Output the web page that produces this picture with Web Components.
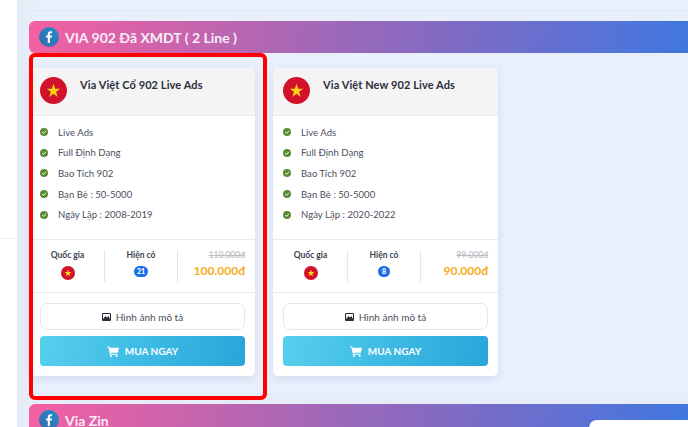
<!DOCTYPE html>
<html><head><meta charset="utf-8">
<style>
html,body{margin:0;height:427px;overflow:hidden;background:#fff}
body{font-family:Lato,"Noto Sans",sans-serif;background:#fff linear-gradient(#e8eff8,#e8eff8) 0 238px/17px 1px no-repeat}
</style></head><body>
<template id="fb-t"><style>:host{display:block;width:20px;height:20px;flex:none}svg{display:block}</style>
<svg width="20" height="20" viewBox="0 0 20 20"><defs><linearGradient id="g" x1="0" y1="1" x2="1" y2="0"><stop offset="0" stop-color="#3b6aa8"/><stop offset="1" stop-color="#1c8fc9"/></linearGradient></defs><circle cx="10" cy="10" r="10" fill="url(#g)"/><path d="M10.900 16V10.600h1.800l.3-2.100h-2.100V7.200c0-.6.2-1 1-1H13.100V4.300c-.2 0-.9-.1-1.600-.1-1.600 0-2.700 1-2.700 2.800v1.500H7v2.100h1.800V16z" fill="#fff"/></svg></template>

<template id="flag-t"><style>:host{display:block;width:var(--s,27px);height:var(--s,27px);flex:none}svg{display:block;width:100%;height:100%}</style>
<svg viewBox="0 0 26 26"><circle cx="13" cy="13" r="13" fill="#d2112c"/><polygon fill="#fcd116" points="13,6.500 14.600,11.300 19.500,11.300 15.500,14.300 17,19.200 13,16.200 9,19.200 10.500,14.300 6.500,11.300 11.400,11.300"/></svg></template>

<template id="sec-t"><style>
:host{display:flex;align-items:center;gap:6px;box-sizing:border-box;height:32px;padding-left:10px;border-radius:6px 0 0 6px;background:linear-gradient(97deg,#f55fa2 0%,#b566b2 34%,#7d6bc5 65%,#3f78e0 100%);color:#f8eef6;font-weight:700;font-size:14px;position:relative}
.w{position:absolute;right:0;top:16px;width:99px;height:20px;background:#fff;border-radius:8px 0 0 0}
</style><x-fb></x-fb><span><slot></slot></span><slot name="extra"></slot></template>

<template id="card-t"><style>
:host{display:block;width:225px;height:308px;flex:none;background:#fff;border-radius:5px;box-shadow:0 3px 10px rgba(120,150,200,.22);color:#3d4252;font-size:10px}
.head{display:flex;gap:13px;padding:9px 10px 0;box-sizing:border-box;background:#f4f4f5;border-radius:5px 5px 0 0;border-bottom:1px solid #e6ebf4;height:48px}
.title{font-size:11px;font-weight:700;color:#2a2e3c;line-height:15px;letter-spacing:.1px}
ul{list-style:none;margin:0;padding:6px 10px 0;height:124px;box-sizing:border-box;border-bottom:1px solid #e6ebf4}
.stats{display:flex;height:53px;box-sizing:border-box;padding:10px 0 0;border-bottom:1px solid #e6ebf4}
.c{display:flex;flex-direction:column;align-items:center;box-sizing:border-box;height:32px;gap:5px;font-size:8.500px;font-weight:700;color:#3a3f4e;line-height:11px}
.c1{width:74px;padding-left:1px}.c2{width:74px;border:solid #dde6f2;border-width:0 1px}
.c3{flex:1;align-items:flex-end;padding-right:10px;gap:1px;font-weight:500}
.old{color:#b9bcc4;text-decoration:line-through}
.price{font-size:12px;font-weight:700;color:#f5ac23;line-height:17px;white-space:nowrap}
.pill{background:#1c6fe8;color:#fff;border-radius:6px;font-size:7px;font-weight:900;height:11px;line-height:11px;min-width:12px;padding:0 3px;text-align:center;box-sizing:border-box}
.btns{padding:10px;display:flex;flex-direction:column;gap:6px}
.b{height:27px;border:1px solid #e3e9f4;border-radius:7px;display:flex;align-items:center;justify-content:center;gap:5px;font-size:10px;color:#4a4e5c;box-sizing:border-box}
.buy{height:30px;border:0;border-radius:4px;background:linear-gradient(100deg,#55d0ee,#29a5da);color:#fff;font-weight:700;font-size:10px;gap:6px}
</style>
<div class="head"><x-flag></x-flag><div class="title"><slot name="title"></slot></div></div>
<ul><slot name="item"></slot></ul>
<div class="stats">
<div class="c c1"><span>Quốc gia</span><x-flag style="--s:14px"></x-flag></div>
<div class="c c2"><span>Hiện có</span><span class="pill"><slot name="stock"></slot></span></div>
<div class="c c3"><span class="old"><slot name="old"></slot></span><span class="price"><slot name="price"></slot></span></div>
</div>
<div class="btns">
<div class="b"><svg width="9" height="8" viewBox="0 0 9 8"><rect width="9" height="8" rx="1" fill="#2c2f38"/><rect x="1" y="1" width="7" height="5" fill="#fff"/><path d="M1 6l2.500-3 1.500 1.500L6.500 3 8 6z" fill="#2c2f38"/></svg><span>Hình ảnh mô tả</span></div>
<div class="b buy"><svg width="12" height="11" viewBox="0 0 12 11"><path d="M0 .5h2.200l.4 1.300H12l-1.200 5H3.700l.2 1H10.500v1H3L1.500 1.500H0z" fill="#fff"/><circle cx="4" cy="10" r="1" fill="#fff"/><circle cx="9.700" cy="10" r="1" fill="#fff"/></svg><span>MUA NGAY</span></div>
</div></template>

<template id="li-t"><style>
:host{display:flex;align-items:center;gap:10px;height:20.600px;font-size:9.500px;color:#4a4e5c;letter-spacing:.05px}
svg{flex:none}
</style><svg width="8" height="8" viewBox="0 0 8 8"><circle cx="4" cy="4" r="4" fill="#5b8a35"/><path d="M2.200 4.100l1.300 1.300 2.400-2.600" fill="none" stroke="#fff" stroke-width="1"/></svg><span><slot></slot></span></template>

<template id="main-t"><style>
:host{display:block;box-sizing:border-box;height:427px;overflow:hidden;margin-left:17px;padding:0 0 0 12px;background:linear-gradient(90deg,#e4ecf8,#e9f0fc 24px);position:relative}
.top{height:10px;border-bottom:1px solid #e2e9f6;margin-left:-12px}
.sp{height:10px}
.row{display:flex;align-items:flex-start;gap:18px;padding:15px 0 0 1px;height:340px;box-sizing:border-box}
.line{height:0;border-top:1px solid #e2e9f6;margin-left:-12px}
.gap{height:10px;background:#e6edf9;margin-left:-12px}
.m{position:absolute;left:12px;top:53px;width:238px;height:347px;box-sizing:border-box;border:4px solid #f00;border-radius:6px}
</style><div class="top"></div><div class="sp"></div><slot name="s1"></slot><div class="row"><slot name="cards"></slot></div><div class="line"></div><div class="gap"></div><slot name="s2"></slot><div class="m"></div></template>

<x-main>
<x-sec slot="s1">VIA 902 Đã XMDT ( 2 Line )</x-sec>
<x-card slot="cards"><span slot="title">Via Việt Cổ 902 Live Ads</span>
<x-li slot="item">Live Ads</x-li><x-li slot="item">Full Định Dạng</x-li><x-li slot="item">Bao Tích 902</x-li><x-li slot="item">Bạn Bè : 50-5000</x-li><x-li slot="item">Ngày Lập : 2008-2019</x-li>
<span slot="stock">21</span><span slot="old">110.000đ</span><span slot="price">100.000đ</span></x-card>
<x-card slot="cards"><span slot="title">Via Việt New 902 Live Ads</span>
<x-li slot="item">Live Ads</x-li><x-li slot="item">Full Định Dạng</x-li><x-li slot="item">Bao Tích 902</x-li><x-li slot="item">Bạn Bè : 50-5000</x-li><x-li slot="item">Ngày Lập : 2020-2022</x-li>
<span slot="stock">8</span><span slot="old">99.000đ</span><span slot="price">90.000đ</span></x-card>
<x-sec slot="s2">Via Zin</x-sec>
</x-main>
<script>
function def(name,id){customElements.define(name,class extends HTMLElement{constructor(){super();this.attachShadow({mode:'open'}).appendChild(document.getElementById(id).content.cloneNode(true));}});}
def('x-fb','fb-t');def('x-flag','flag-t');def('x-li','li-t');def('x-card','card-t');def('x-main','main-t');
customElements.define('x-sec',class extends HTMLElement{constructor(){super();const r=this.attachShadow({mode:'open'});r.appendChild(document.getElementById('sec-t').content.cloneNode(true));if(this.getAttribute('slot')==='s2'){const w=document.createElement('div');w.className='w';r.appendChild(w);}}});
</script>
</body></html>
